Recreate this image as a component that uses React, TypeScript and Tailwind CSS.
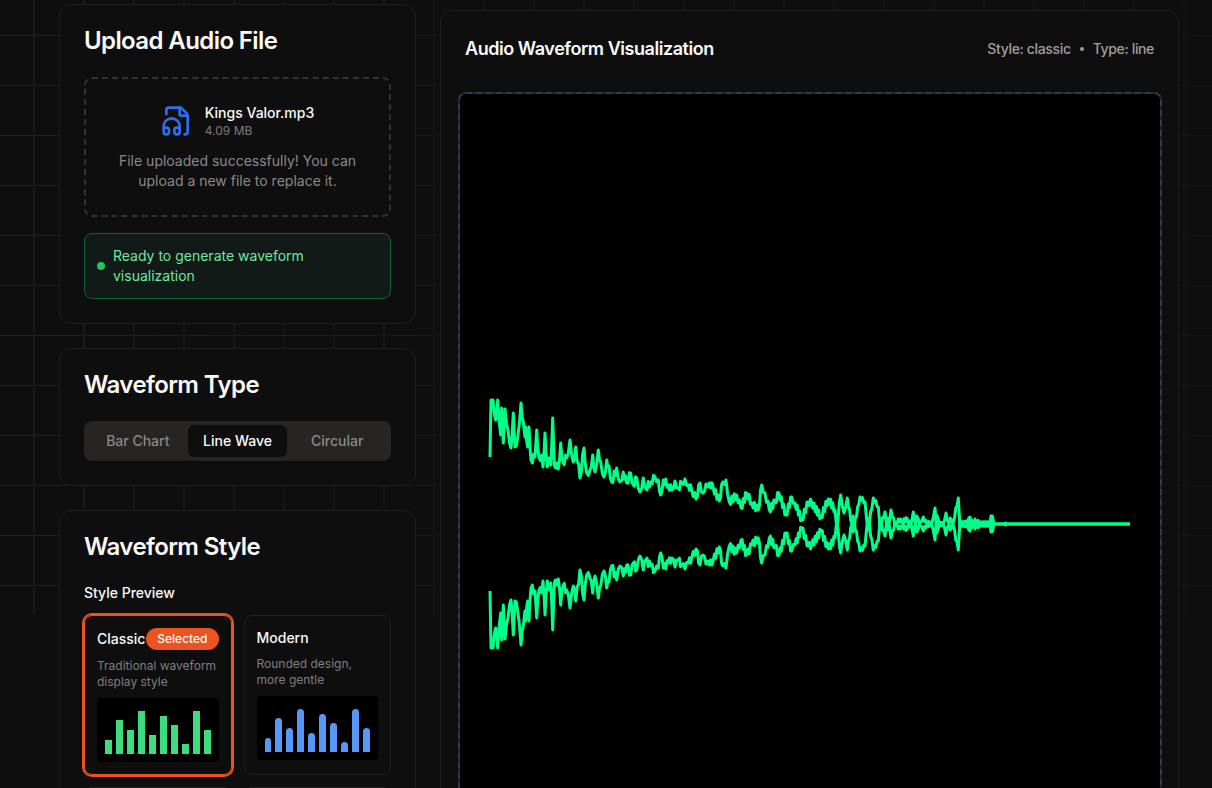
import { FileHeadphone } from "lucide-react"

// top half of the line wave, traced in page pixels. the bottom half mirrors it around y=524
const topLine: [number, number][] = [
  [490, 457], [491, 400], [493, 400], [495.7, 420], [497.7, 400], [500.7, 435], [501.7, 408], [503.3, 443], [505, 409],
  [508, 430], [511, 448], [513.3, 413], [515, 447], [517.7, 437], [521, 403], [523.3, 422], [525, 437], [525.7, 427],
  [527.7, 447], [529, 427], [531, 460], [535, 457], [536.7, 430], [539, 458], [541.7, 455], [543, 467], [545, 433],
  [547.3, 467], [549, 458], [550.7, 465], [552.7, 418], [554.3, 465], [556.7, 463], [558.3, 469], [560.7, 443], [563, 462],
  [566.7, 458], [570, 440], [573.3, 462], [575.7, 447], [580, 478], [584, 448], [586.7, 473], [590, 470], [592.7, 455],
  [595, 472], [598.3, 450], [600.7, 462], [604, 477], [606.7, 460], [609, 466], [611.7, 482], [616.7, 468], [620, 482],
  [623.3, 472], [626.7, 483], [630.7, 473], [633.3, 485], [636.7, 478], [640, 492], [643.3, 478], [645.7, 488], [650.7, 482],
  [655, 477], [658.3, 480], [660.7, 495], [663.3, 480], [668.3, 485], [671.7, 490], [675, 481], [678.3, 488], [681.7, 483],
  [685, 479], [688.3, 485], [691.7, 490], [696, 499], [700, 483], [702.7, 493], [706, 484], [709.3, 483], [713.3, 488],
  [719.3, 501], [722.7, 482], [726, 480], [729.3, 502], [736.7, 495], [741, 508], [746.7, 493], [751.7, 503], [758.3, 510],
  [761.7, 485], [765, 493], [769.3, 510], [775, 502], [779, 493], [786, 515], [791.7, 497], [795, 503], [801.7, 520],
  [808.3, 502], [811.7, 503], [821, 517], [828.3, 499], [835, 510], [836.7, 527], [840.7, 495], [844, 513], [847.3, 498],
  [853, 532], [860, 497], [865, 502], [868, 530], [873.3, 498], [878.3, 507], [880, 527], [885, 512], [887.7, 530],
  [891, 510], [895, 525], [898.3, 519], [901.7, 522], [907.3, 519], [910, 527], [913.3, 512], [916.7, 532], [920, 522],
  [923.3, 517], [927.3, 525], [931.7, 523], [935, 508], [936.7, 533], [939.3, 523], [942.7, 525], [946, 513], [950, 530],
  [953.3, 522], [958.3, 498], [960, 527], [963.3, 522], [966, 527], [970, 517], [971.7, 528], [975, 519], [976.7, 527],
  [980, 524], [990, 524], [991, 516], [992.3, 532], [994, 524], [1005, 524], [1005.5, 523], [1006, 524], [1130, 524],
]

// fills the traced peaks with the fast wiggle the real signal has
function fillWiggle(points: [number, number][]) {
  const out: [number, number][] = []
  points.forEach(([x, y], i) => {
    out.push([x, y])
    const next = points[i + 1]
    if (!next || next[0] - x < 2 || x > 980) return
    const steps = Math.max(2, Math.floor((next[0] - x) / 1.1))
    for (let k = 1; k < steps; k++) {
      const t = k / steps
      const amp = x < 620 ? 4 : x < 840 ? 3.5 : 2
      out.push([x + (next[0] - x) * t, y + (next[1] - y) * t + (k % 2 ? amp : -amp)])
    }
  })
  return out
}

const wave = fillWiggle(topLine)
const wavePath = (sign: number) =>
  wave.map(([x, y], i) => `${i ? "L" : "M"}${x} ${sign > 0 ? y : 1048 - y}`).join(" ")

const bars = [30, 70, 50, 90, 40, 80, 60, 20, 90, 50]

function Card({ className, children }: { className?: string; children: React.ReactNode }) {
  return <div className={`rounded-xl border border-[#201f20] bg-[#0f0e0f] p-6 ${className ?? ""}`}>{children}</div>
}

function Preview({ bar, rounded }: { bar: string; rounded?: boolean }) {
  return (
    <div className="flex h-16 items-end gap-1 rounded bg-black p-2">
      {bars.map((h, i) => (
        <div key={i} className={`flex-1 ${bar} ${rounded ? "rounded-t-full" : ""}`} style={{ height: `${h}%` }} />
      ))}
    </div>
  )
}

export default function App() {
  return (
    <div className="relative h-screen overflow-hidden bg-[#0e0e0f] font-['Inter',sans-serif] text-[#fafafa]">
      {/* Grid backdrop */}
      <div className="pointer-events-none absolute inset-x-0 top-0 h-[615px] bg-[linear-gradient(to_right,#1a191a_2px,transparent_2px),linear-gradient(to_bottom,#222122_1px,transparent_1px)] bg-[size:50px_50px] bg-[position:33px_35px] [mask-image:linear-gradient(to_right,black_6%,rgba(0,0,0,0.55)_35%,rgba(0,0,0,0.3))]" />

      <div className="relative flex items-start gap-6 pl-[59px] pt-1">
        {/* Left column */}
        <div className="flex w-[357px] shrink-0 flex-col gap-6">
          <Card>
            <h2 className="mb-6 text-2xl leading-none font-semibold tracking-tight">Upload Audio File</h2>
            <div className="flex h-[140px] flex-col items-center rounded-lg border-2 border-dashed border-[#333233] px-6 pt-6">
              <div className="flex items-center gap-3">
                <FileHeadphone className="h-8 w-8 text-[#2f6fed]" />
                <div>
                  <p className="text-sm leading-5 font-medium">Kings Valor.mp3</p>
                  <p className="text-xs leading-4 text-[#7d7c7c]">4.09 MB</p>
                </div>
              </div>
              <p className="mt-3 text-center text-sm leading-5 text-[#8a8989]">
                File uploaded successfully! You can upload a new file to replace it.
              </p>
            </div>
            <div className="mt-4 flex items-center gap-2 rounded-lg border border-[#15602f] bg-[#111a16] p-3">
              <span className="h-2 w-2 shrink-0 rounded-full bg-[#22c55e]" />
              <p className="text-sm leading-5 text-[#6ee7a0]">Ready to generate waveform visualization</p>
            </div>
          </Card>

          <Card>
            <h2 className="mb-6 text-2xl leading-none font-semibold tracking-tight">Waveform Type</h2>
            <div className="grid h-10 grid-cols-3 rounded-lg bg-[#272524] p-1 text-sm font-medium">
              <div className="flex items-center justify-center text-[#8c8786]">Bar Chart</div>
              <div className="flex items-center justify-center rounded-md bg-[#0f0e0f]">Line Wave</div>
              <div className="flex items-center justify-center text-[#8c8786]">Circular</div>
            </div>
          </Card>

          <Card>
            <h2 className="mb-6 text-2xl leading-none font-semibold tracking-tight">Waveform Style</h2>
            <p className="mb-3 text-sm leading-5 font-medium">Style Preview</p>
            <div className="grid grid-cols-2 gap-3">
              <div className="rounded-lg border border-[#ea5420] p-3 ring-2 ring-[#ea5420]">
                <div className="mb-2 flex items-center justify-between">
                  <span className="text-sm leading-5 font-medium">Classic</span>
                  <span className="rounded-full border border-transparent bg-[#ea5420] px-2.5 py-0.5 text-xs leading-4 font-medium">
                    Selected
                  </span>
                </div>
                <p className="mb-2 text-xs leading-4 text-[#7f7e7e]">Traditional waveform display style</p>
                <Preview bar="bg-[#3ddc81]" />
              </div>
              <div className="rounded-lg border border-[#201f20] p-3">
                <div className="mb-2 text-sm leading-5 font-medium">Modern</div>
                <p className="mb-2 text-xs leading-4 text-[#7f7e7e]">Rounded design, more gentle</p>
                <Preview bar="bg-[#5797f7]" rounded />
              </div>
              <div className="h-40 rounded-lg border border-[#201f20]" />
              <div className="h-40 rounded-lg border border-[#201f20]" />
            </div>
          </Card>
        </div>

        {/* Waveform panel */}
        <div className="mt-1.5 w-[739px] shrink-0">
          <Card>
            <div className="mb-[29px] flex items-center justify-between">
              <h3 className="text-lg leading-7 font-semibold tracking-tight">Audio Waveform Visualization</h3>
              <div className="flex items-center gap-[9px] text-sm leading-5 font-medium tracking-tight text-[#9f9e9d]">
                <span>Style: classic</span>
                <span className="h-1 w-1 rounded-full bg-[#9f9e9d]" />
                <span>Type: line</span>
              </div>
            </div>
            <div className="flex justify-center">
              <div className="w-[704px] shrink-0 rounded-lg border-2 border-dashed border-[#2f3b52] bg-[#1e2533]">
                <svg viewBox="460 94 700 860" className="block h-[860px] w-[700px] rounded-md bg-black" fill="none">
                  <path d={wavePath(1)} stroke="#00ff88" strokeWidth="3" strokeLinejoin="round" />
                  <path d={wavePath(-1)} stroke="#00ff88" strokeWidth="3" strokeLinejoin="round" />
                </svg>
              </div>
            </div>
          </Card>
        </div>
      </div>
    </div>
  )
}
